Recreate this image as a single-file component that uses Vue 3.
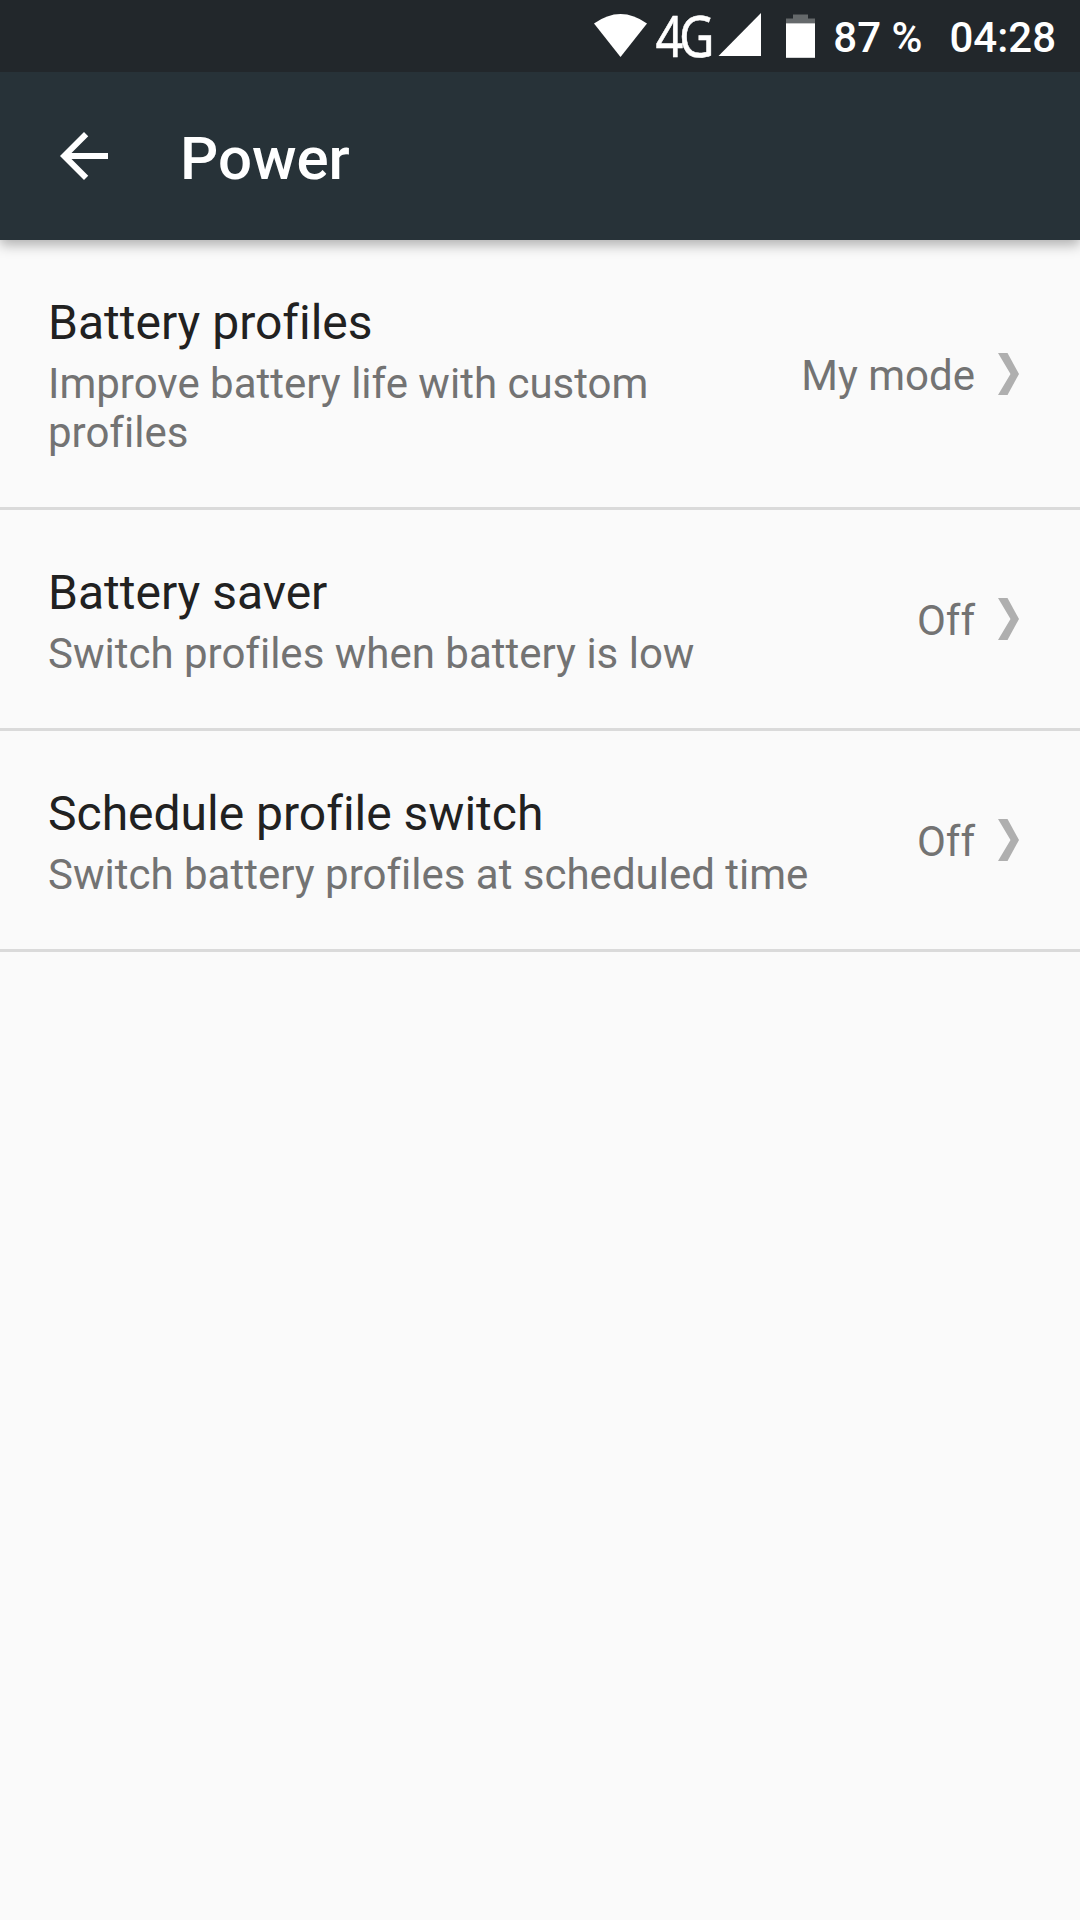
<template>
  <div class="screen">
    <!-- Status bar -->
    <div class="status-bar">
      <svg class="status-icons" width="236" height="72" viewBox="0 0 236 72">
        <!-- wifi -->
        <path d="M14 23.5 Q40.5 4.5 67 23.5 L40.5 57 Z" fill="#fff" />
        <!-- network type -->
        <text class="network-type" transform="translate(75.5 57) scale(0.87 1)">4G</text>
        <!-- signal -->
        <path d="M138.5 56 L181 13 V56 Z" fill="#fff" />
        <!-- battery -->
        <path d="M213 14.5 h15 v4 h7 v5 h-29 v-5 h7 Z" fill="#65696b" />
        <rect x="206" y="23.3" width="29" height="34.5" fill="#fff" />
      </svg>
      <span class="battery-level">{{ batteryLevel }} %</span>
      <span class="clock">{{ clock }}</span>
    </div>

    <!-- Toolbar -->
    <header class="toolbar">
      <button class="back-button" aria-label="Back">
        <svg width="72" height="72" viewBox="0 0 24 24" fill="#fff">
          <path d="M20 11H7.83l5.59-5.59L12 4l-8 8 8 8 1.41-1.41L7.83 13H20v-2z" />
        </svg>
      </button>
      <h1 class="toolbar-title">Power</h1>
    </header>

    <!-- Settings list -->
    <main class="settings">
      <div v-for="item in items" :key="item.title" class="settings-item">
        <div class="settings-text">
          <div class="settings-title">{{ item.title }}</div>
          <div class="settings-summary">{{ item.summary }}</div>
        </div>
        <div class="settings-value">{{ item.value }}</div>
        <svg class="settings-arrow" width="21" height="42" viewBox="0 0 21 42">
          <path d="M0 0 H9.5 L21 21 L9.5 42 H0 L12.5 21 Z" fill="#afafaf" />
        </svg>
      </div>
    </main>
  </div>
</template>

<script setup>
import { ref } from 'vue'

const batteryLevel = ref(87)
const clock = ref('04:28')

const items = ref([
  {
    title: 'Battery profiles',
    summary: 'Improve battery life with custom profiles',
    value: 'My mode'
  },
  {
    title: 'Battery saver',
    summary: 'Switch profiles when battery is low',
    value: 'Off'
  },
  {
    title: 'Schedule profile switch',
    summary: 'Switch battery profiles at scheduled time',
    value: 'Off'
  }
])
</script>

<style>
body {
  margin: 0;
  background: #fafafa;
}
</style>

<style scoped>
.screen {
  width: 1080px;
  height: 1920px;
  display: flex;
  flex-direction: column;
  overflow: hidden;
  background: #fafafa;
  font-family: Roboto, "Noto Sans", sans-serif;
  font-variant-ligatures: none;
}

.status-bar {
  position: relative;
  z-index: 2;
  height: 72px;
  flex: none;
  display: flex;
  align-items: center;
  justify-content: flex-end;
  box-sizing: border-box;
  padding-right: 24px;
  background: #22272b;
  color: #fff;
  font-size: 42px;
  font-weight: 500;
  line-height: 72px;
  white-space: nowrap;
}

.status-icons {
  flex: none;
  margin-right: 17px;
  overflow: visible;
}

.network-type {
  font-family: "Noto Sans", sans-serif;
  font-size: 56px;
  font-weight: 400;
  letter-spacing: -5px;
  fill: #fff;
  stroke: #fff;
  stroke-width: 0.5px;
}

.battery-level,
.clock {
  padding-top: 3px;
}

.battery-level {
  margin-right: 27px;
}

.toolbar {
  position: relative;
  z-index: 1;
  height: 168px;
  flex: none;
  display: flex;
  align-items: center;
  background: #273238;
  box-shadow: 0 5px 12px rgba(0, 0, 0, 0.3);
}

.back-button {
  display: flex;
  margin: 0 0 0 48px;
  padding: 0;
  border: none;
  background: none;
  cursor: pointer;
}

.toolbar-title {
  margin: 0 0 0 60px;
  padding-top: 6px;
  color: #fff;
  font-size: 60px;
  font-weight: 500;
  line-height: 70px;
}

.settings-item {
  display: flex;
  align-items: center;
  box-sizing: border-box;
  padding: 55px 61px 50px 48px;
  border-bottom: 3px solid #dadada;
}

.settings-text {
  flex: 1;
  min-width: 0;
}

.settings-title {
  margin-bottom: 8px;
  color: #212121;
  font-size: 48px;
  line-height: 56px;
}

.settings-summary {
  color: #737373;
  font-size: 42px;
  line-height: 49px;
}

.settings-value {
  margin: 0 23px 2px 24px;
  color: #737373;
  font-size: 42px;
  line-height: 49px;
  white-space: nowrap;
}

.settings-arrow {
  flex: none;
  margin-bottom: 5px;
}
</style>
